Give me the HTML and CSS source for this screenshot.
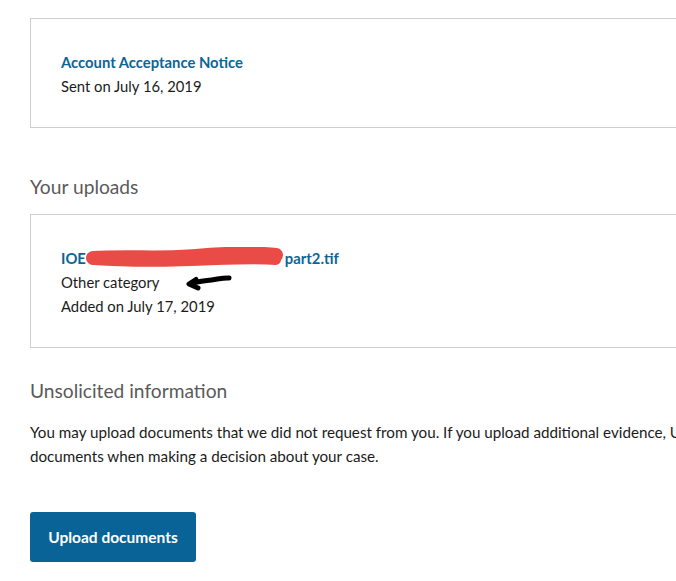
FILE: index.html
```html
<!DOCTYPE html>
<html>
<head>
<meta charset="utf-8">
<link rel="stylesheet" href="styles.css">
</head>
<body>
<main class="page">
  <section class="card card-first">
    <a class="item-title" href="#">Account Acceptance Notice</a>
    <div class="item-line">Sent on July 16, 2019</div>
  </section>

  <h2 class="section-heading uploads-heading">Your uploads</h2>
  <section class="card card-second">
    <a class="item-title" href="#">IOE<span class="redacted"><span class="hidden-text">0000000000000000</span><svg class="redact-svg" width="200" height="22" viewBox="0 0 200 22"><path d="M7 11 C 40 9, 80 12, 110 9 C 140 6, 175 6, 190 8" stroke="#e94c47" stroke-width="14" stroke-linecap="round" fill="none"/><path d="M8 13 C 50 16, 90 15, 130 13 C 160 12, 180 12, 190 13" stroke="#e94c47" stroke-width="10" stroke-linecap="round" fill="none"/></svg></span>part2.tif</a>
    <div class="item-line category-line">Other category<svg class="arrow" width="50" height="18" viewBox="0 0 50 18"><path d="M44 4 C 38 3.5, 32 5.5, 22 6.5 C 16 7, 12 8, 7 9" stroke="#000" stroke-width="5" stroke-linecap="round" fill="none"/><path d="M11 5.5 L 4 10 L 13 14" stroke="#000" stroke-width="5" stroke-linecap="round" stroke-linejoin="round" fill="none"/></svg></div>
    <div class="item-line">Added on July 17, 2019</div>
  </section>

  <h2 class="section-heading unsolicited-heading">Unsolicited information</h2>
  <p class="intro">You may upload documents that we did not request from you. If you upload additional evidence, USCIS will consider these<br>documents when making a decision about your case.</p>

  <button class="primary-btn" type="button">Upload documents</button>
</main>
</body>
</html>
```

FILE: styles.css
```css
html, body {
  margin: 0;
  padding: 0;
  background: #ffffff;
  overflow: hidden;
}

body {
  font-family: "Lato", "Noto Sans", sans-serif;
  font-size: 15px;
  color: #1b1b1b;
  width: 676px;
  height: 581px;
}

.page {
  padding: 18px 0 0 30px;
  width: 900px;
  display: flex;
  flex-direction: column;
  align-items: flex-start;
}

.card {
  box-sizing: border-box;
  width: 760px;
  border: 1px solid #cfcfcf;
  padding: 31px 30px 29px 30px;
  display: flex;
  flex-direction: column;
}

.item-title {
  color: #0b6596;
  font-weight: 700;
  text-decoration: none;
  line-height: 24px;
  font-size: 14.8px;
  display: flex;
  align-items: center;
  white-space: nowrap;
}

.item-line {
  line-height: 24px;
  font-size: 14.8px;
}

.redacted {
  position: relative;
  display: inline-block;
  width: 199px;
  height: 24px;
  overflow: hidden;
}

.hidden-text {
  visibility: hidden;
}

.redact-svg {
  position: absolute;
  left: 0px;
  top: 1px;
}

.category-line {
  position: relative;
}

.arrow {
  position: absolute;
  left: 124px;
  top: 4px;
}

.section-heading {
  margin: 0;
  font-weight: 400;
  font-size: 19.2px;
  line-height: 28px;
  color: #5a5a5a;
}

.uploads-heading {
  margin-top: 45px;
  margin-bottom: 13px;
}

.unsolicited-heading {
  margin-top: 29px;
  margin-bottom: 15px;
}

.intro {
  margin: 0;
  width: 860px;
  font-size: 15.2px;
  line-height: 24px;
}

.primary-btn {
  margin-top: 44px;
  width: 166px;
  height: 50px;
  border: none;
  border-radius: 3px;
  background: #0a6396;
  color: #ffffff;
  font-family: inherit;
  font-weight: 700;
  font-size: 15.5px;
  padding: 0;
}
```
